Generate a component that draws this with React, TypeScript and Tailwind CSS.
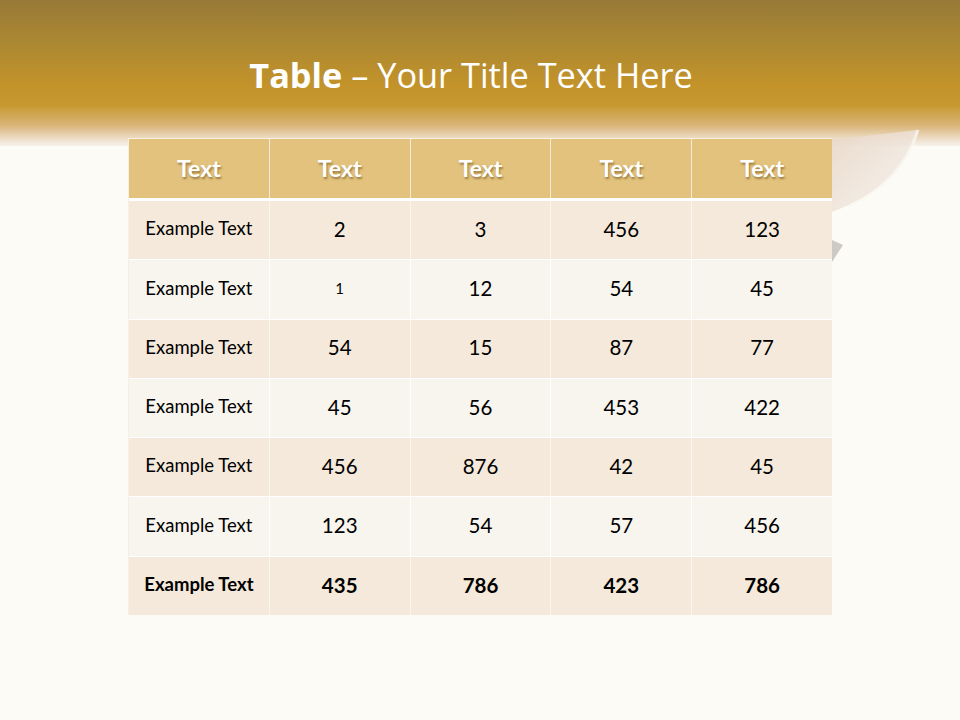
const header = ['Text', 'Text', 'Text', 'Text', 'Text'];

const rows: { label: string; values: string[]; small?: number; bold?: boolean }[] = [
  { label: 'Example Text', values: ['2', '3', '456', '123'] },
  { label: 'Example Text', values: ['1', '12', '54', '45'], small: 0 },
  { label: 'Example Text', values: ['54', '15', '87', '77'] },
  { label: 'Example Text', values: ['45', '56', '453', '422'] },
  { label: 'Example Text', values: ['456', '876', '42', '45'] },
  { label: 'Example Text', values: ['123', '54', '57', '456'] },
  { label: 'Example Text', values: ['435', '786', '423', '786'], bold: true },
];

function Swoosh() {
  return (
    <svg className="absolute left-[780px] top-[90px]" width="180" height="190" viewBox="0 0 180 190" aria-hidden>
      <defs>
        <linearGradient id="curl" x1="0" y1="0" x2="1" y2="1">
          <stop offset="0" stopColor="#e8d6c6" stopOpacity="0.9" />
          <stop offset="0.6" stopColor="#efe5dc" stopOpacity="0.8" />
          <stop offset="1" stopColor="#f8f4ee" stopOpacity="0.6" />
        </linearGradient>
      </defs>
      <path d="M 50 50 L 138 40 C 128 72, 110 100, 52 122 Z" fill="url(#curl)" />
      <path d="M 138 40 C 128 72, 108 98, 70 116" fill="none" stroke="#fbf8f4" strokeWidth="3" opacity="0.7" />
      <path d="M 52 150 L 63 155 L 52 172 Z" fill="#cdc9c6" />
    </svg>
  );
}

export default function App() {
  return (
    <div className="relative h-[720px] w-[960px] overflow-hidden bg-[#fcfbf6]">
      <div className="h-[146px] bg-[linear-gradient(to_bottom,#987a37_0%,#ab8832_30%,#c3932a_58%,#c7982f_72%,#d9b57a_86%,#f1e6d8_97%,#f7f2ea_100%)]" />
      <Swoosh />

      <h1
        className="absolute left-0 right-0 top-[52px] pr-[18px] text-center text-[34.3px] leading-[46px] text-white"
        style={{ fontFamily: '"Open Sans", "Noto Sans", sans-serif' }}
      >
        <span className="font-bold">Table</span> – Your Title Text Here
      </h1>

      <div
        className="absolute left-[128px] top-[138px] w-[704px] border-t border-l border-[#f6efe2]"
        style={{ fontFamily: 'Lato, "Open Sans", sans-serif' }}
      >
        <div className="grid h-[59px] grid-cols-5 gap-x-px bg-[#f3ead9]">
          {header.map((h, i) => (
            <div
              key={i}
              className="flex items-center justify-center bg-[#e2c27c] text-[23px] font-bold text-white [text-shadow:1px_2px_2px_rgba(90,60,10,0.5)]"
            >
              {h}
            </div>
          ))}
        </div>
        <div className="h-[3px] bg-white" />
        <div className="flex flex-col gap-y-px bg-white">
          {rows.map((r, ri) => (
            <div
              key={ri}
              className={`grid h-[58.3px] grid-cols-5 gap-x-px ${ri % 2 === 0 ? 'bg-[#f9f6f0]' : 'bg-white'}`}
            >
              <div
                className={`flex items-center justify-center pb-[2px] text-[18.5px] text-black ${
                  ri % 2 === 0 ? 'bg-[#f4e9da]' : 'bg-[#f8f4ee]'
                } ${r.bold ? 'font-bold' : ''}`}
              >
                {r.label}
              </div>
              {r.values.map((v, vi) => (
                <div
                  key={vi}
                  className={`flex items-center justify-center pb-[2px] text-black ${
                    ri % 2 === 0 ? 'bg-[#f4e9da]' : 'bg-[#f8f4ee]'
                  } ${r.small === vi ? 'text-[15px]' : 'text-[20.5px]'} ${r.bold ? 'font-bold' : ''}`}
                >
                  {v}
                </div>
              ))}
            </div>
          ))}
        </div>
      </div>
    </div>
  );
}
